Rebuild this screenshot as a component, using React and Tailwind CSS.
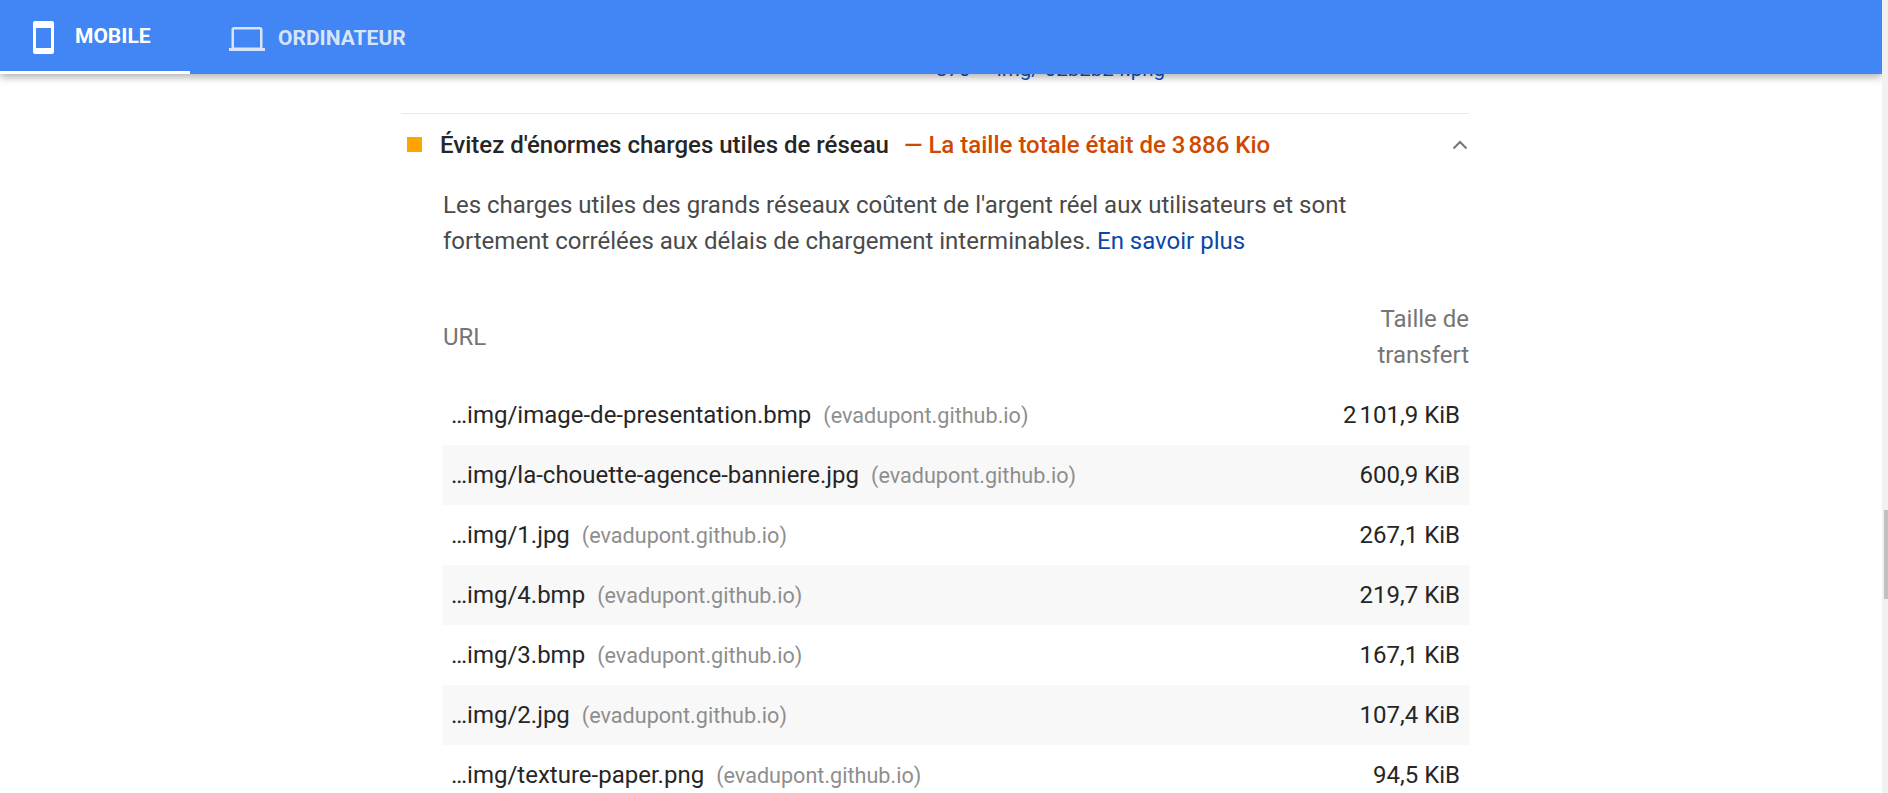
const rows = [
  ["…img/image-de-presentation.bmp", "2\u202f101,9 KiB"],
  ["…img/la-chouette-agence-banniere.jpg", "600,9 KiB"],
  ["…img/1.jpg", "267,1 KiB"],
  ["…img/4.bmp", "219,7 KiB"],
  ["…img/3.bmp", "167,1 KiB"],
  ["…img/2.jpg", "107,4 KiB"],
  ["…img/texture-paper.png", "94,5 KiB"],
];

function PhoneIcon() {
  return (
    <svg width="21" height="33" viewBox="0 0 21 33" className="shrink-0">
      <path
        fillRule="evenodd"
        fill="#fff"
        d="M2 0h17a2 2 0 0 1 2 2v29a2 2 0 0 1-2 2H2a2 2 0 0 1-2-2V2a2 2 0 0 1 2-2zM3 7v20h15V7H3z"
      />
    </svg>
  );
}

function LaptopIcon() {
  return (
    <svg width="36" height="24" viewBox="0 0 36 24" className="shrink-0">
      <path
        fillRule="evenodd"
        fill="#d7e5fc"
        d="M5 0h26a2.500 2.500 0 0 1 2.500 2.500V21H36v3H0v-3h2.500V2.500A2.500 2.500 0 0 1 5 0zM5 2.500V20.500h26V2.500H5z"
      />
    </svg>
  );
}

export default function App() {
  return (
    <div
      className="relative flex h-[793px] w-full overflow-hidden bg-white"
      style={{ fontFamily: "Roboto, sans-serif" }}
    >
      <div className="relative min-w-0 flex-1 overflow-hidden">
        {/* Tabs */}
        <div className="absolute inset-x-0 top-0 z-10 flex h-[74px] bg-[#4285f4] shadow-[0_3px_8px_rgba(0,0,0,0.32)]">
          <div className="flex w-[190px] items-center gap-[21px] border-b-[3px] border-white pl-[33px] pt-[3px]">
            <PhoneIcon />
            <span className="text-[21px] font-bold text-white">MOBILE</span>
          </div>
          <div className="flex items-center gap-[13px] pl-[39px] pt-[3px]">
            <LaptopIcon />
            <span className="text-[21px] font-bold text-[#d7e5fc]">ORDINATEUR</span>
          </div>
        </div>

        <div className="ml-[401px] w-[1068px]">
          {/* Row hidden behind the tabs */}
          <div className="flex h-[113px] items-end justify-start pb-[32px] pl-[535px] text-[20.500px] leading-[24px] text-[#0c50c7]">
            370 — img/ 02b2b24.png
          </div>

          {/* Audit title */}
          <div className="flex h-[62px] items-center border-t border-[#e8e8e8] pl-[6px]">
            <div className="h-[15px] w-[15px] bg-[#ffa400]" />
            <span className="ml-[18px] text-[24px] font-medium text-[#262626]">
              Évitez d'énormes charges utiles de réseau
            </span>
            <span className="ml-[15px] text-[24px] font-medium text-[#d04900]">
              — La taille totale était de 3{"\u202f"}886 Kio
            </span>
            <svg width="16" height="10" viewBox="0 0 16 10" className="ml-auto mr-[1px]">
              <path d="M1.500 8.500L8 2l6.500 6.500" fill="none" stroke="#757575" strokeWidth="2" />
            </svg>
          </div>

          <div className="pl-[42px]">
            <p className="mt-[12px] text-[24px] leading-[36px] text-[#4a4a4a]">
              Les charges utiles des grands réseaux coûtent de l'argent réel aux utilisateurs et sont
              <br />
              fortement corrélées aux délais de chargement interminables.{" "}
              <span className="text-[#0b47a8]">En savoir plus</span>
            </p>

            {/* Table */}
            <div className="mt-[42px] flex h-[72px] items-center justify-between text-[24px] leading-[36px] text-[#757575]">
              <span>URL</span>
              <span className="text-right">
                Taille de
                <br />
                transfert
              </span>
            </div>
            <div className="mt-[12px]">
              {rows.map(([url, size], i) => (
                <div
                  key={url}
                  className={`flex h-[60px] items-center justify-between pl-[8px] pr-[9px] ${i % 2 === 1 ? "bg-[#f8f8f8]" : ""}`}
                >
                  <div className="flex items-baseline">
                    <span className="text-[24px] text-[#262626]">{url}</span>
                    <span className="ml-[12px] text-[21.600px] text-[#8e8e8e]">(evadupont.github.io)</span>
                  </div>
                  <span className="text-[24px] text-[#262626]">{size}</span>
                </div>
              ))}
            </div>
          </div>
        </div>
      </div>

      {/* Scrollbar */}
      <div className="flex w-[6px] shrink-0 justify-end bg-[#f1f1f1]">
        <div className="mt-[510px] h-[89px] w-[4px] bg-[#c1c1c1]" />
      </div>
    </div>
  );
}
